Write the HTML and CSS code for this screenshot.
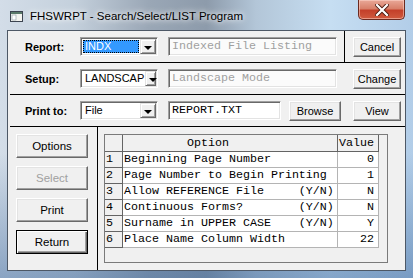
FILE: index.html
```html
<!DOCTYPE html>
<html lang="en">
<head>
    <meta charset="UTF-8">
    <title>FHSWRPT - Search/Select/LIST Program</title>
    <link rel="stylesheet" href="styles.css">
</head>
<body>
    <div class="window">

        <!-- Title bar -->
        <div class="titlebar">
            <svg class="app-icon" width="13" height="11" viewBox="0 0 13 11">
                <rect x="0.5" y="0.5" width="12" height="10" fill="#f4f4f0" stroke="#3c4450"/>
                <rect x="1" y="1" width="11" height="2" fill="#5a7a6a"/>
                <rect x="2" y="4" width="4" height="5" fill="#ffffff" stroke="#8a9aa0" stroke-width="0.6"/>
            </svg>
            <span class="title">FHSWRPT - Search/Select/LIST Program</span>
            <div class="close-btn">
                <svg width="14" height="12" viewBox="0 0 14 12">
                    <path d="M2 1 L12 11 M12 1 L2 11" stroke="#4a1a10" stroke-width="4" stroke-linecap="square"/>
                    <path d="M2 1 L12 11 M12 1 L2 11" stroke="#ffffff" stroke-width="2.2" stroke-linecap="square"/>
                </svg>
            </div>
        </div>

        <div class="client">

            <div class="row">
                <div class="row-main">
                    <span class="lbl">Report:</span>
                    <div class="combo">
                        <span class="combo-text selected">INDX</span>
                        <span class="combo-btn"></span>
                    </div>
                    <div class="field field-wide disabled">Indexed File Listing</div>
                </div>
                <div class="row-side divided">
                    <button class="btn btn-side">Cancel</button>
                </div>
            </div>

            <div class="row">
                <div class="row-main">
                    <span class="lbl">Setup:</span>
                    <div class="combo">
                        <span class="combo-text">LANDSCAP</span>
                        <span class="combo-btn"></span>
                    </div>
                    <div class="field field-wide disabled">Landscape Mode</div>
                </div>
                <div class="row-side">
                    <button class="btn btn-side">Change</button>
                </div>
            </div>

            <div class="row">
                <div class="row-main">
                    <span class="lbl">Print to:</span>
                    <div class="combo">
                        <span class="combo-text">File</span>
                        <span class="combo-btn"></span>
                    </div>
                    <div class="field field-short">REPORT.TXT</div>
                    <button class="btn btn-browse">Browse</button>
                </div>
                <div class="row-side">
                    <button class="btn btn-side">View</button>
                </div>
            </div>

            <div class="bottom">
                <div class="btn-col">
                    <button class="btn btn-big">Options</button>
                    <button class="btn btn-big" disabled>Select</button>
                    <button class="btn btn-big">Print</button>
                    <button class="btn btn-big btn-default">Return</button>
                </div>

                <div class="grid-box">
                    <div class="grid" id="optionGrid">
                        <div class="cell fixed"></div>
                        <div class="cell fixed head-option">Option</div>
                        <div class="cell fixed head-value">Value</div>
                    </div>
                </div>
            </div>

        </div>
    </div>

    <script src="app.js"></script>
</body>
</html>
```

FILE: styles.css
```css
* {
    margin: 0;
    padding: 0;
    box-sizing: border-box;
}

html, body {
    width: 413px;
    height: 278px;
    overflow: hidden;
}

body {
    font-family: "Liberation Sans", Arial, sans-serif;
    font-size: 11px;
    color: #000;
}

/* Aero style frame */
.window {
    width: 413px;
    height: 278px;
    display: flex;
    flex-direction: column;
    padding: 0 7px 7px 7px;
    background-color: #a9bdd3;
    background-image:
        linear-gradient(180deg, rgba(255, 255, 255, 0) 55%, rgba(50, 95, 150, 0.45) 100%),
        linear-gradient(90deg, #d3dde8 0%, #c4d0dc 18%, #9aa7b6 36%, #8d9bab 50%, #b3c6d8 62%, #c6def2 80%, #b2cde8 100%);
}

.titlebar {
    height: 30px;
    display: flex;
    align-items: center;
    flex-shrink: 0;
}

.app-icon {
    margin-left: 3px;
    margin-top: 2px;
}

.title {
    margin-left: 7px;
    margin-top: 2px;
    font-size: 11.5px;
    color: #000;
    text-shadow: 0 0 5px #fff, 0 0 8px rgba(255, 255, 255, 0.9);
}

.close-btn {
    margin-left: auto;
    margin-right: 1px;
    align-self: flex-start;
    width: 47px;
    height: 20px;
    display: flex;
    align-items: center;
    justify-content: center;
    border: 1px solid #6b2a20;
    border-top: none;
    border-radius: 0 0 5px 5px;
    background: linear-gradient(180deg, #e9a898 0%, #d8806a 45%, #c4402a 55%, #d05a3e 100%);
    box-shadow: inset 0 0 0 1px rgba(255, 220, 210, 0.5);
}

/* Client area */
.client {
    flex: 1;
    display: flex;
    flex-direction: column;
    background: #f0f0f0;
    border: 1px solid #4d5866;
}

.row {
    height: 32px;
    margin-left: 2px;
    display: flex;
    border-bottom: 1px solid #000;
    flex-shrink: 0;
}

.row-main {
    flex: 1;
    display: flex;
    align-items: center;
    padding-left: 15px;
}

.lbl {
    width: 55px;
    font-weight: bold;
    font-size: 11px;
}

.row-side {
    width: 61px;
    display: flex;
    align-items: center;
    padding-left: 8px;
    border-left: 1px solid transparent;
}

.row-side.divided {
    border-left-color: #000;
}

/* Combo box */
.combo {
    width: 78px;
    height: 19px;
    margin-right: 10px;
    display: flex;
    background: #fff;
    border: 1px solid;
    border-color: #a0a0a0 #fff #fff #a0a0a0;
    box-shadow: inset 1px 1px 0 #696969, inset -1px -1px 0 #e3e3e3;
    padding: 2px 2px 2px 2px;
}

.combo-text {
    flex: 1;
    padding-left: 2px;
    line-height: 13px;
    font-size: 11px;
}

.combo-text.selected {
    background: #3399ff;
    color: #fff;
    outline: 1px dotted #000;
    outline-offset: -1px;
}

.combo-btn {
    width: 16px;
    margin: -1px -1px -1px 1px;
    background: #f0f0f0;
    border: 1px solid;
    border-color: #e3e3e3 #696969 #696969 #e3e3e3;
    box-shadow: inset 1px 1px 0 #fff, inset -1px -1px 0 #a0a0a0;
    position: relative;
}

.combo-btn::after {
    content: "";
    position: absolute;
    left: 3px;
    top: 6px;
    border-left: 4px solid transparent;
    border-right: 4px solid transparent;
    border-top: 4px solid #000;
}

/* Text fields */
.field {
    height: 19px;
    padding: 0 3px;
    line-height: 17px;
    font-family: "Liberation Mono", "Courier New", monospace;
    font-size: 11.67px;
    background: #fff;
    border: 1px solid;
    border-color: #a0a0a0 #fff #fff #a0a0a0;
    box-shadow: inset 1px 1px 0 #696969, inset -1px -1px 0 #e3e3e3;
    white-space: pre;
    overflow: hidden;
}

.field.disabled {
    color: #a0a0a0;
    background: #fbfbfb;
}

.field-wide {
    width: 169px;
}

.field-short {
    width: 113px;
    margin-right: 8px;
}

/* Buttons */
.btn {
    font-family: "Liberation Sans", Arial, sans-serif;
    font-size: 11px;
    color: #000;
    background: #f0f0f0;
    border: 1px solid;
    border-color: #fff #696969 #696969 #fff;
    box-shadow: inset -1px -1px 0 #a0a0a0, inset 1px 1px 0 #e3e3e3;
    text-align: center;
}

.btn:disabled {
    color: #a0a0a0;
}

.btn-side {
    width: 48px;
    height: 20px;
}

.btn-browse {
    width: 52px;
    height: 20px;
}

.btn-big {
    width: 72px;
    height: 24px;
    font-size: 11.5px;
}

.btn-default {
    border: 1px solid #000;
    box-shadow: inset 1px 1px 0 #fff, inset -1px -1px 0 #696969, inset -2px -2px 0 #a0a0a0;
}

/* Bottom section */
.bottom {
    flex: 1;
    display: flex;
}

.btn-col {
    width: 90px;
    border-right: 1px solid #000;
    padding: 7px 0 0 8px;
    display: flex;
    flex-direction: column;
    gap: 8px;
}

.grid-box {
    width: 284px;
    height: 129px;
    margin: 7px 0 0 6px;
    background: #f0f0f0;
    border: 1px solid #7a7a7a;
}

.grid {
    display: grid;
    grid-template-columns: 18px 215px 41px;
    grid-template-rows: 17px;
    grid-auto-rows: 16px;
    font-family: "Liberation Mono", "Courier New", monospace;
    font-size: 11.67px;
}

.cell {
    background: #fff;
    border-right: 1px solid #b4b4b4;
    border-bottom: 1px solid #b4b4b4;
    white-space: pre;
    overflow: hidden;
    line-height: 15px;
    padding-left: 1px;
}

.cell.fixed {
    background: #f0f0f0;
    border-color: #646464;
}

.head-option {
    padding-left: 64px;
    line-height: 16px;
}

.head-value {
    line-height: 16px;
}

.cell.num {
    padding-left: 1px;
}

.cell.value {
    text-align: right;
    padding-right: 4px;
}
```

FILE: app.js
```javascript
// Report options shown in the grid
const options = [
    { text: "Beginning Page Number", value: "0" },
    { text: "Page Number to Begin Printing", value: "1" },
    { text: "Allow REFERENCE File     (Y/N)", value: "N" },
    { text: "Continuous Forms?        (Y/N)", value: "N" },
    { text: "Surname in UPPER CASE    (Y/N)", value: "Y" },
    { text: "Place Name Column Width", value: "22" }
];

const grid = document.getElementById('optionGrid');

options.forEach((opt, i) => {
    const num = document.createElement('div');
    num.className = 'cell fixed num';
    num.textContent = i + 1;

    const text = document.createElement('div');
    text.className = 'cell';
    text.textContent = opt.text;

    const value = document.createElement('div');
    value.className = 'cell value';
    value.textContent = opt.value;

    grid.append(num, text, value);
});
```
